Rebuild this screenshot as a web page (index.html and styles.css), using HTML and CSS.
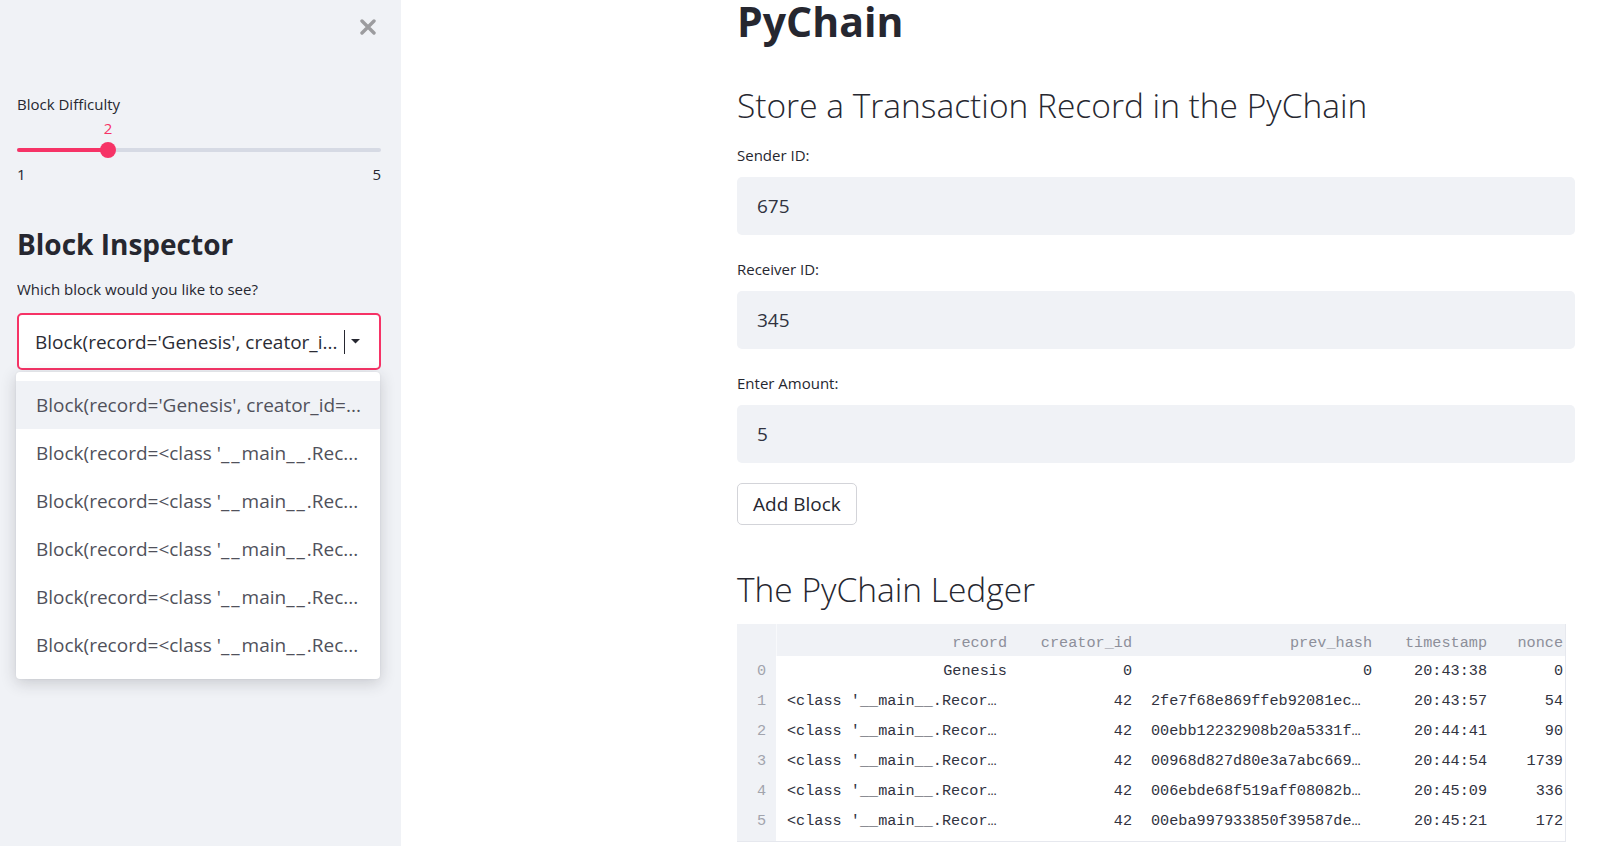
FILE: index.html
```html
<!DOCTYPE html>
<html lang="en">
<head>
<meta charset="utf-8">
<title>PyChain</title>
<link rel="stylesheet" href="styles.css">
</head>
<body>
<div class="app">
  <aside class="sidebar">
    <div class="close-row">
      <svg class="close" viewBox="0 0 16 16" aria-hidden="true"><path d="M2 2 L14 14 M14 2 L2 14" stroke="#9c9c9f" stroke-width="3.4" stroke-linecap="round" fill="none"/></svg>
    </div>
    <div class="label lbl-diff">Block Difficulty</div>
    <div class="slider">
      <div class="slider-value-row"><span class="slider-value" style="left: 25%">2</span></div>
      <div class="track-area">
        <div class="track">
          <div class="fill" style="width: 25%"></div>
          <div class="thumb" style="left: 25%"></div>
        </div>
      </div>
      <div class="ticks"><span>1</span><span>5</span></div>
    </div>
    <h2 class="side-title">Block Inspector</h2>
    <div class="label lbl-which">Which block would you like to see?</div>
    <div class="select">
      <div class="select-box">
        <span class="select-text">Block(record='Genesis', creator_i...</span>
        <span class="sep"></span>
        <svg class="caret" viewBox="0 0 9 5" aria-hidden="true"><path d="M0 0 H9 L4.5 4.5 Z" fill="#262730"/></svg>
      </div>
      <ul class="menu">
        <li class="active">Block(record='Genesis', creator_id=...</li>
        <li>Block(record=&lt;class '<span class="us">__</span>main<span class="us">__</span>.Rec...</li>
        <li>Block(record=&lt;class '<span class="us">__</span>main<span class="us">__</span>.Rec...</li>
        <li>Block(record=&lt;class '<span class="us">__</span>main<span class="us">__</span>.Rec...</li>
        <li>Block(record=&lt;class '<span class="us">__</span>main<span class="us">__</span>.Rec...</li>
        <li>Block(record=&lt;class '<span class="us">__</span>main<span class="us">__</span>.Rec...</li>
      </ul>
    </div>
  </aside>

  <main class="main">
    <h1 class="title">PyChain</h1>
    <h3 class="h3 h3-store">Store a Transaction Record in the PyChain</h3>

    <div class="field-label first">Sender ID:</div>
    <div class="input">675</div>

    <div class="field-label">Receiver ID:</div>
    <div class="input">345</div>

    <div class="field-label">Enter Amount:</div>
    <div class="input">5</div>

    <button class="btn" type="button">Add Block</button>

    <h3 class="h3 h3-ledger">The PyChain Ledger</h3>

    <div class="grid">
      <div class="c hd idx"></div>
      <div class="c hd hd-first">record</div>
      <div class="c hd">creator_id</div>
      <div class="c hd">prev_hash</div>
      <div class="c hd">timestamp</div>
      <div class="c hd last">nonce</div>

      <div class="c idx">0</div>
      <div class="c">Genesis</div>
      <div class="c">0</div>
      <div class="c">0</div>
      <div class="c">20:43:38</div>
      <div class="c last">0</div>

      <div class="c idx">1</div>
      <div class="c l">&lt;class '__main__.Recor…</div>
      <div class="c">42</div>
      <div class="c l">2fe7f68e869ffeb92081ec…</div>
      <div class="c">20:43:57</div>
      <div class="c last">54</div>

      <div class="c idx">2</div>
      <div class="c l">&lt;class '__main__.Recor…</div>
      <div class="c">42</div>
      <div class="c l">00ebb12232908b20a5331f…</div>
      <div class="c">20:44:41</div>
      <div class="c last">90</div>

      <div class="c idx">3</div>
      <div class="c l">&lt;class '__main__.Recor…</div>
      <div class="c">42</div>
      <div class="c l">00968d827d80e3a7abc669…</div>
      <div class="c">20:44:54</div>
      <div class="c last">1739</div>

      <div class="c idx">4</div>
      <div class="c l">&lt;class '__main__.Recor…</div>
      <div class="c">42</div>
      <div class="c l">006ebde68f519aff08082b…</div>
      <div class="c">20:45:09</div>
      <div class="c last">336</div>

      <div class="c idx">5</div>
      <div class="c l">&lt;class '__main__.Recor…</div>
      <div class="c">42</div>
      <div class="c l">00eba997933850f39587de…</div>
      <div class="c">20:45:21</div>
      <div class="c last">172</div>
    </div>
  </main>
</div>
</body>
</html>
```

FILE: styles.css
```css
* {
  box-sizing: border-box;
}

html,
body {
  margin: 0;
  padding: 0;
}

body {
  font-family: "Open Sans", "Noto Sans", sans-serif;
  color: #262730;
  background: #ffffff;
}

.app {
  display: flex;
  width: 1603px;
  height: 846px;
  overflow: hidden;
}

/* ---------- Sidebar ---------- */

.sidebar {
  width: 401px;
  flex: none;
  background: #f0f2f6;
  padding: 0 20px 0 17px;
}

.close-row {
  display: flex;
  justify-content: flex-end;
  height: 35px;
  padding-top: 19px;
  padding-right: 5px;
}

.close {
  display: block;
  width: 16px;
  height: 16px;
}

.label {
  font-size: 15px;
  line-height: 20px;
}

.lbl-diff {
  margin-top: 59px;
}

.slider-value-row {
  position: relative;
  height: 20px;
  margin-top: 4px;
}

.slider-value {
  position: absolute;
  top: 0;
  transform: translateX(-50%);
  color: #f63366;
  font-size: 15px;
  line-height: 20px;
}

.track-area {
  height: 23px;
  display: flex;
  align-items: center;
}

.track {
  position: relative;
  flex: 1;
  height: 4px;
  border-radius: 2px;
  background: #d6dae4;
}

.fill {
  position: absolute;
  left: 0;
  top: 0;
  bottom: 0;
  border-radius: 2px;
  background: #f63366;
}

.thumb {
  position: absolute;
  top: 50%;
  width: 16px;
  height: 16px;
  margin: -8px 0 0 -8px;
  border-radius: 50%;
  background: #f63366;
}

.ticks {
  display: flex;
  justify-content: space-between;
  margin-top: 3px;
  font-size: 15px;
  line-height: 20px;
}

.side-title {
  margin: 42px 0 0;
  font-size: 28px;
  line-height: 36px;
  font-weight: 700;
}

.lbl-which {
  margin-top: 17px;
}

.select {
  position: relative;
  margin-top: 14px;
}

.select-box {
  height: 57px;
  display: flex;
  align-items: center;
  padding: 0 19px 0 16px;
  border: 2px solid #f63366;
  border-radius: 5px;
  background: #ffffff;
  font-size: 19px;
}

.select-text {
  flex: 1;
  min-width: 0;
  white-space: nowrap;
  overflow: hidden;
  color: #2b2c35;
}

.sep {
  flex: none;
  width: 1.5px;
  height: 24px;
  background: #262730;
}

.caret {
  flex: none;
  display: block;
  width: 9px;
  height: 5px;
  margin-left: 6px;
}

.menu {
  position: absolute;
  top: 59px;
  left: -1px;
  width: 364px;
  margin: 0;
  padding: 9px 0 10px;
  list-style: none;
  background: #ffffff;
  border-radius: 4px;
  box-shadow: 0 4px 16px rgba(38, 39, 48, 0.2), 0 0 2px rgba(38, 39, 48, 0.08);
}

.menu li {
  height: 48px;
  line-height: 48px;
  padding-left: 20px;
  font-size: 19px;
  color: #50515b;
  white-space: nowrap;
  overflow: hidden;
}

.menu li.active {
  background: #f0f2f6;
}

.menu .us {
  letter-spacing: 2px;
}

/* ---------- Main ---------- */

.main {
  flex: 1;
  min-width: 0;
  padding: 0 28px 0 336px;
}

.title {
  margin: 0;
  font-size: 41px;
  line-height: 42px;
  font-weight: 700;
}

.h3 {
  margin: 0;
  font-size: 33.5px;
  line-height: 40px;
  font-weight: 300;
}

.h3-store {
  margin-top: 43px;
}

.field-label {
  margin-top: 24px;
  font-size: 15px;
  line-height: 20px;
}

.field-label.first {
  margin-top: 20px;
}

.input {
  margin-top: 12px;
  height: 58px;
  display: flex;
  align-items: center;
  padding-left: 20px;
  border-radius: 5px;
  background: #f0f2f6;
  font-size: 19px;
  color: #31333f;
}

.btn {
  display: block;
  margin-top: 20px;
  height: 42px;
  padding: 0 15px;
  border: 1px solid #d3d4d9;
  border-radius: 5px;
  background: #ffffff;
  font-family: "Open Sans", "Noto Sans", sans-serif;
  font-size: 19px;
  color: #262730;
}

.h3-ledger {
  margin-top: 44px;
}

/* ---------- Ledger table ---------- */

.grid {
  margin-top: 15px;
  width: 829px;
  display: grid;
  grid-template-columns: 39px 239px 125px 240px 115px 70px;
  padding-bottom: 5px;
  border-right: 1px solid #e6e8ee;
  border-bottom: 1px solid #e6e8ee;
  background: linear-gradient(to right, #f0f2f6 39px, #ffffff 39px);
  font-family: "Liberation Mono", "DejaVu Sans Mono", monospace;
  font-size: 15.2px;
}

.c {
  height: 30px;
  line-height: 30px;
  padding-right: 8px;
  text-align: right;
  white-space: nowrap;
  overflow: hidden;
  color: #31333f;
}

.c.hd {
  height: 32px;
  line-height: 26px;
  padding-top: 6px;
  background: #f0f2f6;
  color: #8d8f9a;
}

.c.hd-first {
  border-left: 1px solid #f8f9fb;
}

.c.idx {
  padding-right: 10px;
  color: #a2a4ad;
}

.c.l {
  text-align: left;
  padding-left: 11px;
  padding-right: 0;
}

.c.last {
  padding-right: 2px;
}
```
